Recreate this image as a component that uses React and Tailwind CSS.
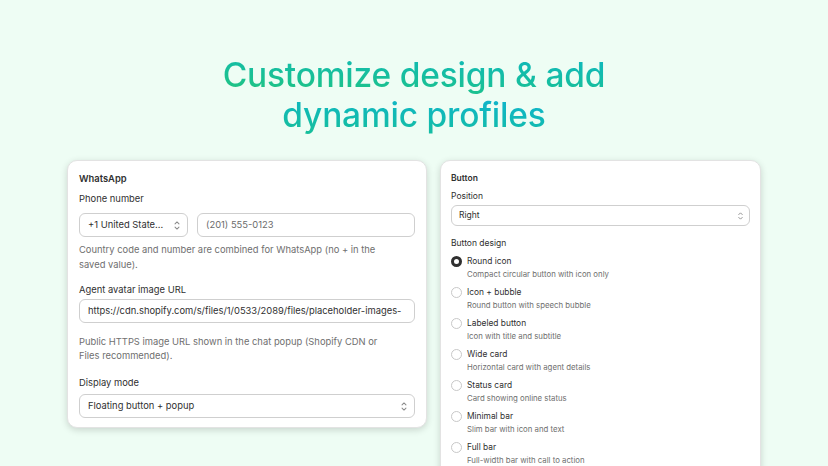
import React from "react";

const Chevrons = ({ className = "" }) => (
  <svg viewBox="0 0 10 14" className={className} fill="none" stroke="currentColor" strokeWidth="1.3" strokeLinecap="round" strokeLinejoin="round">
    <path d="M2.5 5 L5 2.5 L7.5 5" />
    <path d="M2.5 9 L5 11.5 L7.5 9" />
  </svg>
);

const designs = [
  { title: "Round icon", desc: "Compact circular button with icon only", checked: true },
  { title: "Icon + bubble", desc: "Round button with speech bubble" },
  { title: "Labeled button", desc: "Icon with title and subtitle" },
  { title: "Wide card", desc: "Horizontal card with agent details" },
  { title: "Status card", desc: "Card showing online status" },
  { title: "Minimal bar", desc: "Slim bar with icon and text" },
  { title: "Full bar", desc: "Full-width bar with call to action" },
];

const App = () => {
  return (
    <div className="w-[828px] h-[466px] overflow-hidden bg-[#eefdf4] font-['Inter','Liberation_Sans',sans-serif] text-[#303030]">
      <h1 className="pt-[55px] text-center text-[33.5px] leading-[40px] font-medium tracking-[-0.2px]">
        <span className="bg-gradient-to-tr from-[#22c47a] to-[#12b2d2] bg-clip-text text-transparent">
          Customize design &amp; add
          <br />
          dynamic profiles
        </span>
      </h1>

      <div className="mt-[25px] flex justify-center items-start gap-[13px]">
        {/* WhatsApp card */}
        <div className="w-[360px] bg-white rounded-[10px] border border-[#e3e3e3] shadow-[0_2px_7px_rgba(0,0,0,0.16)] px-[11px] pt-[11px] pb-[9px] text-[9.4px]">
          <div className="leading-[14px] font-semibold">WhatsApp</div>
          <div className="mt-[6px] leading-[14px]">Phone number</div>
          <div className="mt-[7px] flex gap-[9px]">
            <div className="w-[109px] h-[24px] rounded-[6px] border border-[#cfcfcf] flex items-center justify-between pl-[8px] pr-[6px]">
              <span>+1 United State...</span>
              <Chevrons className="w-[8px] h-[11px] text-[#8a8a8a]" />
            </div>
            <div className="flex-1 h-[24px] rounded-[6px] border border-[#cfcfcf] flex items-center px-[8px] text-[#6b6b6b]">
              (201) 555-0123
            </div>
          </div>
          <p className="mt-[5px] leading-[15px] text-[#6f6f6f] max-w-[312px]">
            Country code and number are combined for WhatsApp (no + in the saved value).
          </p>
          <div className="mt-[11px] leading-[14px]">Agent avatar image URL</div>
          <div className="mt-[2px] h-[24px] rounded-[6px] border border-[#cfcfcf] flex items-center px-[8px] overflow-hidden whitespace-nowrap">
            https://cdn.shopify.com/s/files/1/0533/2089/files/placeholder-images-
          </div>
          <p className="mt-[12px] leading-[14px] text-[#6f6f6f] max-w-[312px]">
            Public HTTPS image URL shown in the chat popup (Shopify CDN or Files recommended).
          </p>
          <div className="mt-[13px] leading-[14px]">Display mode</div>
          <div className="mt-[4px] h-[24px] rounded-[6px] border border-[#cfcfcf] flex items-center justify-between pl-[8px] pr-[6px]">
            <span>Floating button + popup</span>
            <Chevrons className="w-[8px] h-[11px] text-[#8a8a8a]" />
          </div>
        </div>

        {/* Button card */}
        <div className="w-[321px] h-[330px] bg-white rounded-[10px] border border-[#e3e3e3] shadow-[0_2px_7px_rgba(0,0,0,0.16)] px-[10px] pt-[11px]">
          <div className="text-[8.5px] leading-[12px] font-semibold">Button</div>
          <div className="mt-[6px] text-[8.5px] leading-[12px]">Position</div>
          <div className="mt-[3px] h-[21px] rounded-[6px] border border-[#cfcfcf] flex items-center justify-between pl-[7px] pr-[5px] text-[8.5px]">
            <span>Right</span>
            <Chevrons className="w-[7px] h-[10px] text-[#8a8a8a]" />
          </div>
          <div className="mt-[11px] text-[8.5px] leading-[12px]">Button design</div>
          <div className="mt-[5px] flex flex-col gap-[5px]">
            {designs.map((d) => (
              <div key={d.title} className="flex gap-[5px]">
                <div className="pt-[1.5px]">
                  {d.checked ? (
                    <div className="w-[11px] h-[11px] rounded-full border-[3px] border-[#303030] bg-white" />
                  ) : (
                    <div className="w-[11px] h-[11px] rounded-full border border-[#c8c8c8] bg-white" />
                  )}
                </div>
                <div>
                  <div className="text-[8.4px] leading-[14px]">{d.title}</div>
                  <div className="text-[7.8px] leading-[12px] text-[#6f6f6f]">{d.desc}</div>
                </div>
              </div>
            ))}
          </div>
        </div>
      </div>
    </div>
  );
};

export default App;
